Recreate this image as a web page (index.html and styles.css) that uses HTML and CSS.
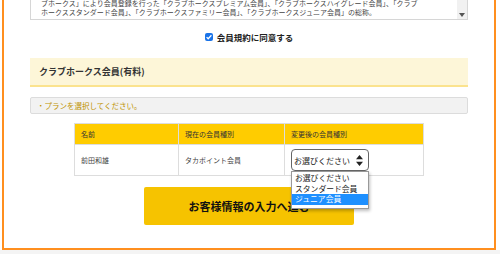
FILE: index.html
```html
<!DOCTYPE html>
<html lang="ja">
<head>
  <meta charset="UTF-8">
  <meta name="viewport" content="width=device-width, initial-scale=1.0">
  <title>会員種別の変更</title>
  <link rel="stylesheet" href="styles.css">
</head>
<body>

  <div class="page">

    <!-- 規約テキスト (上部はスクロールで隠れている) -->
    <div class="terms">
      <div class="terms-text">
        <p>ブホークス」により会員登録を行った「クラブホークスプレミアム会員」、「クラブホークスハイグレード会員」、「クラブ</p>
        <p>ホークススタンダード会員」、「クラブホークスファミリー会員」、「クラブホークスジュニア会員」の総称。</p>
      </div>
      <div class="scrollbar">
        <svg width="6" height="4" viewBox="0 0 6 4"><path d="M0 0h6L3 4z" fill="#555"/></svg>
      </div>
    </div>

    <label class="agree">
      <span class="check">
        <svg width="8" height="8" viewBox="0 0 8 8"><path d="M1.6 4.1l1.6 1.6 3.2-3.4" fill="none" stroke="#fff" stroke-width="1.3"/></svg>
      </span>
      会員規約に同意する
    </label>

    <div class="section-title">クラブホークス会員(有料)</div>

    <div class="notice">・プランを選択してください。</div>

    <table class="plan-table">
      <thead>
        <tr>
          <th class="col-name">名前</th>
          <th class="col-current">現在の会員種別</th>
          <th>変更後の会員種別</th>
        </tr>
      </thead>
      <tbody>
        <tr>
          <td>前田和雄</td>
          <td>タカポイント会員</td>
          <td>
            <div class="select-wrap">
              <div class="select">
                <span>お選びください</span>
                <svg width="7" height="11" viewBox="0 0 7 11"><path d="M3.5 0L7 4.2H0z M3.5 11L0 6.8h7z" fill="#222"/></svg>
              </div>
              <ul class="options">
                <li>お選びください</li>
                <li>スタンダード会員</li>
                <li class="selected">ジュニア会員</li>
              </ul>
            </div>
          </td>
        </tr>
      </tbody>
    </table>

    <div class="actions">
      <button class="next-btn">お客様情報の入力へ進む</button>
    </div>

  </div>

  <div class="footer"></div>

</body>
</html>
```

FILE: styles.css
```css
body {
  margin: 0;
  font-family: "Noto Sans CJK JP", "Noto Sans", sans-serif;
  color: #333;
  background-color: #fff;
}

.page {
  margin: 0 4px 0 2px;
  border: 2px solid #ff8f1f; /* orange frame */
  border-top: none;
  padding: 0 26px 23px;
  background-color: #fff;
}

.footer {
  height: 10px;
  background-color: #f4f4f4;
}

/* terms box */
.terms {
  display: flex;
  height: 19px;
  border: 1px solid #d6d6d6;
  border-top: none;
  background-color: #fff;
}

.terms-text {
  flex: 1;
  display: flex;
  flex-direction: column;
  justify-content: flex-end;
  padding: 0 0 2px 10px;
  overflow: hidden;
}

.terms-text p {
  margin: 0;
  font-size: 7px;
  line-height: 9px;
  white-space: nowrap;
  color: #444;
}

.scrollbar {
  width: 10px;
  background-color: #f1f1f1;
  display: flex;
  align-items: flex-end;
  justify-content: center;
  padding-bottom: 2px;
}

/* agree checkbox */
.agree {
  display: flex;
  align-items: center;
  justify-content: center;
  gap: 4px;
  height: 14px;
  margin: 10px 0 14px;
  font-size: 8.5px;
  font-weight: bold;
  color: #222;
}

.check {
  display: flex;
  align-items: center;
  justify-content: center;
  width: 8px;
  height: 8px;
  border-radius: 2px;
  background-color: #1a73e8;
}

/* section header */
.section-title {
  height: 27px;
  line-height: 27px;
  padding-left: 9px;
  background-color: #fdf6d8;
  border-bottom: 2px solid #fbe38e;
  font-size: 9px;
  font-weight: bold;
  color: #333;
}

.notice {
  margin-top: 10px;
  height: 15px;
  line-height: 15px;
  padding-left: 6px;
  background-color: #f2f2f2;
  border: 1px solid #dcdcdc;
  border-radius: 2px;
  font-size: 7.5px;
  color: #c09300;
}

/* plan table */
.plan-table {
  border-collapse: collapse;
  width: 350px;
  margin: 9px auto 0;
  font-size: 7px;
}

.plan-table th, .plan-table td {
  border: 1px solid #ddd;
  text-align: left;
  padding: 0 6px;
  font-weight: normal;
}

.plan-table th {
  height: 20px;
  background-color: #ffcc00;
  color: #333;
}

.plan-table td {
  height: 30px;
  color: #444;
}

.col-name {
  width: 91px;
}

.col-current {
  width: 93px;
}

.select-wrap {
  position: relative;
  width: 78px;
}

.select {
  display: flex;
  align-items: center;
  justify-content: space-between;
  box-sizing: border-box;
  height: 22px;
  padding: 0 5px 0 2px;
  border: 1px solid #666;
  border-radius: 4px;
  background-color: #fff;
  font-size: 8px;
  color: #222;
}

.options {
  position: absolute;
  top: 22px;
  left: 0;
  z-index: 2;
  width: 78px;
  box-sizing: border-box;
  margin: 0;
  padding: 1px 0 3px;
  list-style: none;
  background-color: #fff;
  border: 1px solid #999;
  box-shadow: 1px 2px 3px rgba(0, 0, 0, 0.25);
  font-size: 7.8px;
  color: #222;
}

.options li {
  height: 10.5px;
  line-height: 10.5px;
  padding-left: 3px;
}

.options .selected {
  background-color: #1e90ff;
  color: #fff;
}

/* next button */
.actions {
  display: flex;
  justify-content: center;
  margin-top: 11px;
}

.next-btn {
  width: 210px;
  height: 38px;
  border: none;
  border-radius: 2px;
  background-color: #f6c300;
  font-family: inherit;
  font-size: 11px;
  font-weight: bold;
  color: #111;
}
```
